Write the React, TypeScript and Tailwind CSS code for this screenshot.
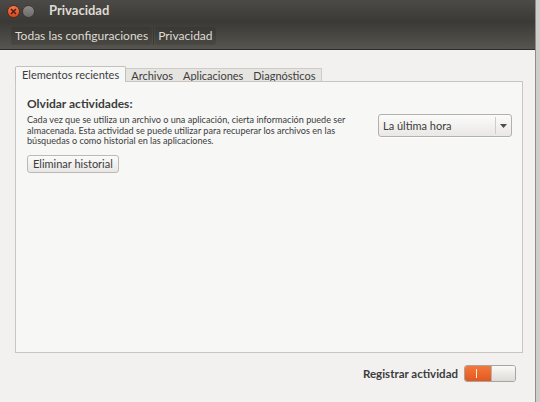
import React from "react";

const font = { fontFamily: "Lato, 'Liberation Sans', sans-serif" };

const TitleBar = () => {
  return (
    <div className="h-[23px] flex items-center bg-gradient-to-b from-[#4b4a46] to-[#3a3935]">
      <div className="w-[13px] h-[13px] ml-[7px] rounded-full bg-gradient-to-b from-[#f07a4e] to-[#d8461f] border border-[#5a2a18] flex items-center justify-center">
        <svg width="7" height="7" viewBox="0 0 7 7">
          <path d="M1 1 L6 6 M6 1 L1 6" stroke="#4a1a0c" strokeWidth="1.4" />
        </svg>
      </div>
      <div className="w-[13px] h-[13px] ml-[2px] rounded-full bg-gradient-to-b from-[#8c8b87] to-[#6d6c68] border border-[#3a3936]" />
      <div className="ml-[14px] -mt-[3px] text-[13px] font-bold text-[#dfdbd2] leading-none">Privacidad</div>
    </div>
  );
};

const Toolbar = () => {
  return (
    <div className="h-[27px] flex items-center pl-[11px] bg-gradient-to-b from-[#3c3b37] to-[#56554f] border-b border-[#2e2d2a]">
      <div className="px-[4px] py-[3px] rounded-[3px] bg-black/10 text-[12px] text-[#dfdbd2] leading-none">Todas las configuraciones</div>
      <div className="w-px h-[18px] bg-[#3a3935] mx-[1px]" />
      <div className="px-[3px] py-[3px] rounded-[3px] bg-black/10 text-[12px] text-[#dfdbd2] leading-none">Privacidad</div>
    </div>
  );
};

const Tabs = () => {
  const rest = ["Archivos", "Aplicaciones", "Diagnósticos"];
  return (
    <div className="flex items-end h-[16px]">
      <div className="h-[16px] px-[6px] flex items-center bg-[#f7f7f6] border border-b-0 border-[#c4c1bc] rounded-t-[2px] text-[11px] text-[#3c3c3c] leading-none relative z-10 -mb-px pb-px">
        Elementos recientes
      </div>
      <div className="h-[13px] flex items-center bg-[#e6e4e0] border border-b-0 border-l-0 border-[#cfccc7]">
        {rest.map((t) => (
          <div key={t} className="px-[5px] text-[11px] text-[#3c3c3c] leading-none">
            {t}
          </div>
        ))}
      </div>
    </div>
  );
};

const Combo = () => {
  return (
    <div className="w-[134px] h-[23px] flex items-center rounded-[3px] border border-[#b4b1ab] bg-gradient-to-b from-[#fbfbfa] to-[#e9e8e6] shadow-[0_1px_0_#ffffff]">
      <div className="flex-1 pl-[4px] text-[11px] text-[#3c3c3c] leading-none">La última hora</div>
      <div className="w-px h-[17px] bg-[#d0cdc8]" />
      <div className="w-[15px] flex items-center justify-center">
        <svg width="7" height="4" viewBox="0 0 7 4">
          <path d="M0 0 L7 0 L3.5 4 Z" fill="#4c4c4c" />
        </svg>
      </div>
    </div>
  );
};

const Switch = () => {
  return (
    <div className="w-[52px] h-[17px] flex rounded-[3px] overflow-hidden border border-[#a8a5a0]">
      <div className="w-[26px] bg-gradient-to-b from-[#f3783c] to-[#e2571f] flex items-center pl-[11px]">
        <div className="w-px h-[9px] bg-[#fff3d6]" />
      </div>
      <div className="flex-1 bg-gradient-to-b from-[#fafaf9] to-[#dddbd7] border-l border-[#b8b5b0]" />
    </div>
  );
};

export default function App() {
  return (
    <div className="w-[540px] h-[402px] flex flex-col bg-[#cfcdc9] overflow-hidden" style={font}>
      <div className="flex flex-1">
        <div className="w-[536px] flex flex-col border-r border-[#8e8c88]">
          <TitleBar />
          <Toolbar />
          <div className="flex-1 flex flex-col bg-[#f2f1f0] pt-[15px] pl-[15px] pr-[12px]">
            <Tabs />
            <div className="h-[272px] bg-[#f7f7f6] border border-[#c9c6c1] flex pl-[11px] pr-[10px] pt-[15px]">
              <div className="flex-1 flex flex-col items-start">
                <div className="text-[12px] font-bold text-[#3c3c3c] leading-[14px]">Olvidar actividades:</div>
                <p className="mt-[4px] w-[330px] text-[9.1px] leading-[10.5px] text-[#3c3c3c]">
                  Cada vez que se utiliza un archivo o una aplicación, cierta información puede ser almacenada. Esta actividad se puede utilizar para recuperar los archivos en las búsquedas o como historial en las aplicaciones.
                </p>
                <div className="mt-[8px] h-[18px] px-[5px] flex items-center rounded-[3px] border border-[#bcb9b4] bg-gradient-to-b from-[#fbfbfa] to-[#e8e7e5] text-[11px] text-[#3c3c3c] leading-none">
                  Eliminar historial
                </div>
              </div>
              <div className="pt-[17px]">
                <Combo />
              </div>
            </div>
            <div className="flex items-center justify-end mt-[12px] pr-[7px] gap-[6px]">
              <div className="text-[11.5px] font-bold text-[#3c3c3c] leading-none">Registrar actividad</div>
              <Switch />
            </div>
          </div>
        </div>
      </div>
    </div>
  );
}
